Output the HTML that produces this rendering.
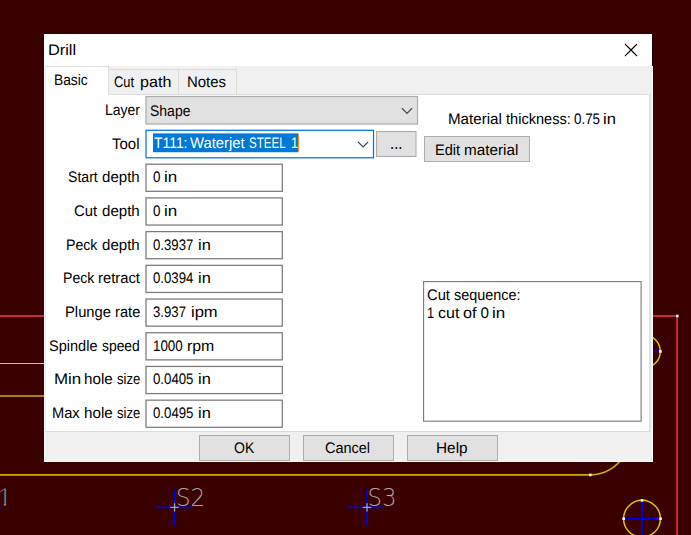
<!DOCTYPE html>
<html lang="en">
<head>
<meta charset="utf-8">
<title>Drill</title>
<style>
*{box-sizing:border-box;margin:0;padding:0}
html,body{width:691px;height:535px;overflow:hidden;background:#3a0000}
body{position:relative;font-family:"Liberation Sans",sans-serif;font-size:15.25px;color:#000;line-height:20px}
#stage{position:absolute;left:0;top:0;width:691px;height:535px;overflow:hidden}
#stage>*{position:absolute}
svg{left:0;top:0}
.t{white-space:pre;height:20px;text-rendering:geometricPrecision}
.t span{position:absolute;left:0;top:0;transform-origin:0 0;white-space:pre}
.dlg{left:44px;top:34px;width:609px;height:428px;background:#f0f0f0;border:1px solid #fff;border-top:none}
.title{left:44px;top:34px;width:608px;height:32px;background:#fff}
.tedge{left:652px;top:34px;width:1px;height:32px;background:#1c0000}
.panel{left:45px;top:94px;width:605px;height:338px;background:#fff;border:1px solid #dcdcdc;border-left-color:#ececec;box-shadow:1px 0 0 #e4e4e4}
.tab{top:69px;height:26px;background:#f0f0f0;border:1px solid #dcdcdc}
.tabsel{left:45px;top:66px;width:64px;height:29px;background:#fff;border:1px solid #dcdcdc;border-left-color:#ececec;border-bottom:none}
.btn{background:#e1e1e1;border:1px solid #adadad}
</style>
</head>
<body>
<div id="stage">
<svg width="691" height="535" viewBox="0 0 691 535">
  <clipPath id="c1"><rect x="-40" y="480" width="60" height="23.6"/><rect x="3.6" y="503" width="2.6" height="4"/></clipPath>
  <g font-family="'Liberation Sans',sans-serif" font-size="26.5" fill="#a8a8a8" stroke="#3a0000" stroke-width="1.1" clip-path="url(#c1)" opacity="0.99">
    <text x="-20.4" y="506.2">S1</text>
  </g>
  <g fill="#aca4a4" font-family="'DejaVu Sans Light','DejaVu Sans','Liberation Sans',sans-serif" font-weight="200" font-size="24" opacity="0.99">
    <text x="175.9" y="506" textLength="29.3" lengthAdjust="spacingAndGlyphs">S2</text>
    <text x="367.55" y="506" textLength="29" lengthAdjust="spacingAndGlyphs">S3</text>
  </g>
  <g fill="none" stroke-width="1.6">
    <path d="M0 316 H45 M650 316 H677.1 V535" stroke="#c42e2e" stroke-width="1.9"/>
    <path d="M0 363.5 H45" stroke="#c0c0c0" stroke-width="1.1"/>
    <path d="M0 396 H45" stroke="#c8b000" stroke-width="1.7"/>
    <path d="M0 474.85 H590.3 A39 39 0 0 0 624.1 455.35" stroke="#c8b000" stroke-width="1.7"/>
    <circle cx="643.8" cy="351.4" r="16.5" stroke="#dcc400" stroke-width="1.5"/>
    <circle cx="642" cy="518.7" r="18.4" stroke="#dcc400" stroke-width="1.5"/>
    <g stroke="#0000e6" stroke-width="1.7">
      <path d="M625 351.4 H660 M623.8 518.7 H660.2 M642 500.5 V535"/>
      <path d="M156.3 507.35 H192.7 M174.57 489.4 V525.1"/>
      <path d="M347.9 507.35 H384.1 M367 489.4 V525.1"/>
      <path d="M-36 507.35 H1.6"/>
    </g>
    <g stroke="#a8a4a4" stroke-width="1.3">
      <path d="M170.4 507.35 H178.7 M174.57 503.3 V511.5"/>
      <path d="M362.8 507.35 H371.2 M367 503.3 V511.5"/>
    </g>
  </g>
  <g fill="#fff">
    <rect x="676" y="314.7" width="2.6" height="2.6"/>
    <rect x="659.1" y="350.1" width="2.6" height="2.6"/>
    <rect x="640.7" y="499.1" width="2.6" height="2.6"/>
    <rect x="622.4" y="517.4" width="2.6" height="2.6"/>
    <rect x="659.2" y="517.4" width="2.6" height="2.6"/>
    <rect x="589" y="473.6" width="2.6" height="2.6"/>
  </g>
</svg>

<div class="dlg"></div>
<div class="title"></div>
<div class="tedge"></div>
<svg width="14" height="14" viewBox="0 0 14 14" style="left:624px;top:43px"><path d="M1 1 L13 13 M13 1 L1 13" stroke="#000" stroke-width="1.1" fill="none"/></svg>

<div class="panel"></div>
<div class="tab" style="left:108px;width:71px"></div>
<div class="tab" style="left:178px;width:59px"></div>
<div class="tabsel"></div>

<div class="btn" style="left:424px;top:136px;width:106px;height:26px"></div>
<div class="btn" style="left:199px;top:435px;width:91px;height:26px"></div>
<div class="btn" style="left:303px;top:435px;width:91px;height:26px"></div>
<div class="btn" style="left:407px;top:435px;width:91px;height:26px"></div>

<svg width="691" height="535" viewBox="0 0 691 535">
  <rect x="146.00" y="96.50" width="271.55" height="27.50" fill="#e1e1e1" stroke="#adadad" stroke-width="1.25"/>
  <path d="M401.9 108.2 L407 113.3 L412.1 108.2" fill="none" stroke="#404040" stroke-width="1.2"/>
  <rect x="146.00" y="130.30" width="227.50" height="27.50" fill="#fff" stroke="#0078d7" stroke-width="1.25"/>
  <rect x="153" y="133.4" width="145" height="18.8" fill="#0078d7"/>
  <rect x="297.9" y="133.4" width="1.1" height="18.8" fill="#ff8a2a"/>
  <path d="M358 141.8 L363.1 146.9 L368.2 141.8" fill="none" stroke="#404040" stroke-width="1.2"/>
  <rect x="376.50" y="131.50" width="39.50" height="25.00" fill="#e1e1e1" stroke="#adadad" stroke-width="1.1"/>
  <rect x="146.00" y="164.20" width="136.30" height="27.12" fill="#fff" stroke="#7a7a7a" stroke-width="1.25"/>
  <rect x="146.00" y="197.91" width="136.30" height="27.12" fill="#fff" stroke="#7a7a7a" stroke-width="1.25"/>
  <rect x="146.00" y="231.62" width="136.30" height="27.12" fill="#fff" stroke="#7a7a7a" stroke-width="1.25"/>
  <rect x="146.00" y="265.33" width="136.30" height="27.12" fill="#fff" stroke="#7a7a7a" stroke-width="1.25"/>
  <rect x="146.00" y="299.04" width="136.30" height="27.12" fill="#fff" stroke="#7a7a7a" stroke-width="1.25"/>
  <rect x="146.00" y="332.75" width="136.30" height="27.12" fill="#fff" stroke="#7a7a7a" stroke-width="1.25"/>
  <rect x="146.00" y="366.46" width="136.30" height="27.12" fill="#fff" stroke="#7a7a7a" stroke-width="1.25"/>
  <rect x="146.00" y="400.17" width="136.30" height="27.12" fill="#fff" stroke="#7a7a7a" stroke-width="1.25"/>
  <rect x="423.60" y="281.60" width="217.50" height="139.60" fill="#fff" stroke="#7a7a7a" stroke-width="1.1"/>
</svg>

<div class="t" style="left:48.26px;top:41px"><span style="left:0.00px;transform:scaleX(1.0708)">Drill</span></div>
<div class="t" style="left:54.17px;top:71px"><span style="left:-0.00px;transform:scaleX(0.9042)">Basic</span></div>
<div class="t" style="left:114.17px;top:73px"><span style="left:-0.00px;transform:scaleX(0.8440)">Cut </span><span style="left:25.97px;transform:scaleX(1.0559)">path</span></div>
<div class="t" style="left:186.68px;top:73px"><span style="left:-0.00px;transform:scaleX(0.9789)">Notes</span></div>
<div class="t" style="left:105.05px;top:101px"><span style="left:0.00px;transform:scaleX(0.9170)">Layer</span></div>
<div class="t" style="left:112.35px;top:135px"><span style="left:0.00px;transform:scaleX(0.9832)">Tool</span></div>
<div class="t" style="left:67.81px;top:168px"><span style="left:-0.00px;transform:scaleX(0.9248)">Start </span><span style="left:34.65px;transform:scaleX(0.9890)">depth</span></div>
<div class="t" style="left:74.47px;top:202px"><span style="left:-0.00px;transform:scaleX(0.9758)">Cut </span><span style="left:27.99px;transform:scaleX(0.9890)">depth</span></div>
<div class="t" style="left:66.14px;top:236px"><span style="left:0.00px;transform:scaleX(0.9262)">Peck </span><span style="left:36.32px;transform:scaleX(0.9890)">depth</span></div>
<div class="t" style="left:62.85px;top:269px"><span style="left:-0.00px;transform:scaleX(0.9231)">Peck </span><span style="left:35.38px;transform:scaleX(0.9690)">retract</span></div>
<div class="t" style="left:65.09px;top:303px"><span style="left:-0.00px;transform:scaleX(0.9692)">Plunge </span><span style="left:50.25px;transform:scaleX(0.9633)">rate</span></div>
<div class="t" style="left:49.08px;top:337px"><span style="left:0.00px;transform:scaleX(0.9535)">Spindle </span><span style="left:53.36px;transform:scaleX(0.9100)">speed</span></div>
<div class="t" style="left:53.71px;top:370px"><span style="left:0.00px;transform:scaleX(1.1101)">Min </span><span style="left:30.39px;transform:scaleX(0.9982)">hole </span><span style="left:63.66px;transform:scaleX(0.8615)">size</span></div>
<div class="t" style="left:51.90px;top:404px"><span style="left:-0.00px;transform:scaleX(0.9615)">Max </span><span style="left:32.20px;transform:scaleX(0.9982)">hole </span><span style="left:65.47px;transform:scaleX(0.8615)">size</span></div>
<div class="t" style="left:150.41px;top:102px"><span style="left:0.00px;transform:scaleX(0.9170)">Shape</span></div>
<div class="t" style="left:153.87px;top:134px;color:#fff"><span style="left:0.00px;transform:scaleX(0.9114)">T111: </span><span style="left:36.53px;transform:scaleX(0.9714)">Waterjet </span><span style="left:95.56px;transform:scaleX(0.7596)">STEEL </span><span style="left:137.30px;transform:scaleX(0.8400)">1</span></div>
<div class="t" style="left:153.36px;top:168px"><span style="left:-0.00px;transform:scaleX(0.8800)">0 </span><span style="left:10.82px;transform:scaleX(1.1179)">in</span></div>
<div class="t" style="left:153.36px;top:202px"><span style="left:-0.00px;transform:scaleX(0.8800)">0 </span><span style="left:10.82px;transform:scaleX(1.1179)">in</span></div>
<div class="t" style="left:153.32px;top:236px"><span style="left:-0.00px;transform:scaleX(0.8648)">0.3937 </span><span style="left:44.80px;transform:scaleX(1.0769)">in</span></div>
<div class="t" style="left:153.32px;top:269px"><span style="left:-0.00px;transform:scaleX(0.8645)">0.0394 </span><span style="left:44.80px;transform:scaleX(1.0769)">in</span></div>
<div class="t" style="left:153.10px;top:303px"><span style="left:0.00px;transform:scaleX(0.8639)">3.937 </span><span style="left:37.52px;transform:scaleX(1.0844)">ipm</span></div>
<div class="t" style="left:153.41px;top:337px"><span style="left:-0.00px;transform:scaleX(0.8750)">1000 </span><span style="left:33.95px;transform:scaleX(1.0392)">rpm</span></div>
<div class="t" style="left:153.32px;top:370px"><span style="left:-0.00px;transform:scaleX(0.8670)">0.0405 </span><span style="left:44.80px;transform:scaleX(1.0769)">in</span></div>
<div class="t" style="left:153.32px;top:404px"><span style="left:-0.00px;transform:scaleX(0.8670)">0.0495 </span><span style="left:44.80px;transform:scaleX(1.0769)">in</span></div>
<div class="t" style="left:448.06px;top:110px"><span style="left:-0.00px;transform:scaleX(0.9923)">Material </span><span style="left:57.60px;transform:scaleX(0.9555)">thickness: </span><span style="left:126.20px;transform:scaleX(0.8772)">0.75 </span><span style="left:155.45px;transform:scaleX(1.0872)">in</span></div>
<div class="t" style="left:435.11px;top:141px"><span style="left:0.00px;transform:scaleX(0.9520)">Edit </span><span style="left:29.19px;transform:scaleX(1.0010)">material</span></div>
<div class="t" style="left:427.27px;top:286px"><span style="left:0.00px;transform:scaleX(0.9670)">Cut </span><span style="left:27.06px;transform:scaleX(0.9445)">sequence:</span></div>
<div class="t" style="left:427.02px;top:304px"><span style="left:-0.00px;transform:scaleX(0.8400)">1 </span><span style="left:11.39px;transform:scaleX(1.0513)">cut </span><span style="left:36.39px;transform:scaleX(1.0583)">of </span><span style="left:53.38px;transform:scaleX(1.0000)">0 </span><span style="left:64.76px;transform:scaleX(1.1179)">in</span></div>
<div class="t" style="left:234.16px;top:439px"><span style="left:-0.00px;transform:scaleX(0.9214)">OK</span></div>
<div class="t" style="left:325.39px;top:439px"><span style="left:-0.00px;transform:scaleX(0.9486)">Cancel</span></div>
<div class="t" style="left:436.04px;top:439px"><span style="left:0.00px;transform:scaleX(1.0068)">Help</span></div>
<div class="t" style="left:390.23px;top:135px"><span style="left:-0.00px;transform:scaleX(0.7837);font-size:19px;top:-1px">...</span></div>
</div>
</body>
</html>
